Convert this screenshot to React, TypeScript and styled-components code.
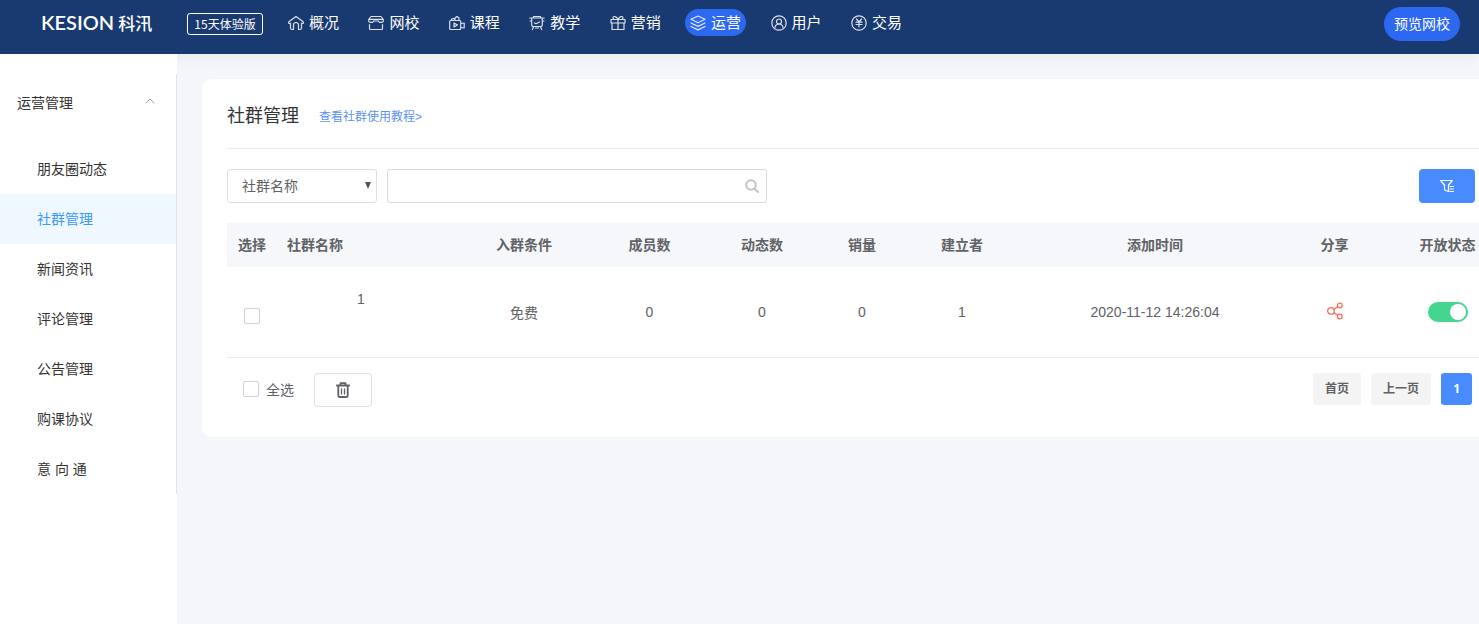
import React from "react";
import styled, { createGlobalStyle } from "styled-components";

const GlobalStyle = createGlobalStyle`
  *, *::before, *::after { box-sizing: border-box; }
  body {
    margin: 0;
    background: #f4f6fa;
    color: #333;
    font-family: "Liberation Sans", "Noto Sans CJK SC", sans-serif;
    font-size: 14px;
  }
  button, input, select { font: inherit; color: inherit; margin: 0; }
  ul { list-style: none; margin: 0; padding: 0; }
  a { color: inherit; text-decoration: none; }
`;

const Page = styled.div`
  display: flex;
  flex-direction: column;
  min-height: 100vh;
`;

const TopBar = styled.header`
  position: relative;
  display: flex;
  align-items: flex-start;
  height: 54px;
  padding: 0 19px 0 41px;
  background: #183a70;
  color: #fff;
  box-shadow: 0 2px 16px rgba(0, 0, 0, 0.06);
`;

const Logo = styled.a`
  display: flex;
  align-items: center;
  gap: 4px;
  width: 146px;
  height: 44px;
  font-family: Lato, sans-serif;
  font-size: 20px;
  font-weight: 600;
`;

const LogoCn = styled.span`
  font-family: "Noto Sans CJK SC", sans-serif;
  font-size: 17px;
  font-weight: 500;
`;

const TrialBadge = styled.span`
  width: 76px;
  height: 22px;
  margin-top: 13px;
  border: 1px solid #fff;
  border-radius: 3px;
  font-family: "Noto Sans CJK SC", sans-serif;
  font-size: 12px;
  line-height: 20px;
  text-align: center;
`;

const Nav = styled.nav`
  display: flex;
  justify-content: space-between;
  width: 624px;
  margin: 9px auto 0 20px;
`;

const NavLink = styled.a<{ $active?: boolean }>`
  display: flex;
  align-items: center;
  gap: 5px;
  height: 27px;
  padding: 0 5px;
  border-radius: 14px;
  background: ${(p) => (p.$active ? "#2d68f0" : "transparent")};
  font-size: 15px;
  line-height: 27px;
  white-space: nowrap;
`;

const LineIcon = styled.svg`
  display: block;
  flex: none;
  fill: none;
  stroke: currentColor;
  stroke-linecap: round;
  stroke-linejoin: round;
`;

const NavIcon = styled(LineIcon)`
  width: 16px;
  height: 16px;
  opacity: 0.85;
`;

const PreviewButton = styled.button`
  height: 34px;
  margin-top: 7px;
  padding: 0 10px 2px;
  border: 0;
  border-radius: 17px;
  background: #2d68f0;
  color: #fff;
  font-size: 14px;
  white-space: nowrap;
`;

const Body = styled.div`
  display: flex;
  flex: 1;
`;

const Sidebar = styled.aside`
  width: 177px;
  flex: none;
  padding-top: 20px;
  position: relative;
  background: #fff;
`;

const SideMenu = styled.div`
  border-right: 1px solid #e2e5e8;
`;

const SideHeading = styled.button`
  display: flex;
  align-items: center;
  justify-content: space-between;
  width: 100%;
  height: 56px;
  margin-bottom: 14px;
  padding: 0 20px 0 17px;
  border: 0;
  background: none;
`;

const Chevron = styled(LineIcon)`
  width: 12px;
  height: 12px;
  color: #a5a09b;
`;

const SideLink = styled.a<{ $active?: boolean }>`
  display: block;
  height: 50px;
  padding-left: 37px;
  background: ${(p) => (p.$active ? "#eff7ff" : "transparent")};
  color: ${(p) => (p.$active ? "#3b9bfc" : "#333")};
  line-height: 50px;
`;

const Main = styled.main`
  flex: 1;
  min-width: 0;
  padding: 25px 0 0 25px;
`;

const Card = styled.section`
  padding: 0 0 30px 25px;
  border-radius: 10px 0 0 10px;
  background: #fff;
`;

const CardHead = styled.div`
  display: flex;
  align-items: center;
  gap: 20px;
  height: 70px;
  border-bottom: 1px solid #ebebed;
`;

const Title = styled.h1`
  margin: 0;
  font-size: 18px;
  font-weight: 400;
`;

const HelpLink = styled.a`
  padding-top: 4px;
  color: #5c92f5;
  font-size: 12px;
`;

const Toolbar = styled.form`
  display: flex;
  gap: 10px;
  padding: 20px 4px 20px 0;
`;

const SelectBox = styled.label`
  position: relative;
  width: 150px;
`;

const Select = styled.select`
  appearance: none;
  width: 100%;
  height: 34px;
  padding: 0 20px 0 14px;
  border: 1px solid #dcdfe2;
  border-radius: 3px;
  background: #fff;
  color: #606266;
`;

const SelectArrow = styled.svg`
  position: absolute;
  top: 13px;
  right: 6px;
  width: 6px;
  height: 7px;
  fill: #555;
  pointer-events: none;
`;

const SearchBox = styled.label`
  display: flex;
  align-items: center;
  width: 380px;
  height: 34px;
  padding: 0 7px 0 12px;
  border: 1px solid #d9dbe1;
  border-radius: 3px;
`;

const SearchInput = styled.input`
  flex: 1;
  min-width: 0;
  border: 0;
  outline: 0;
  background: none;
`;

const SearchIcon = styled(LineIcon)`
  width: 14px;
  height: 14px;
  color: #c0c4cc;
`;

const FilterButton = styled.button`
  display: flex;
  align-items: center;
  justify-content: center;
  width: 56px;
  height: 34px;
  margin-left: auto;
  border: 0;
  border-radius: 4px;
  background: #488bff;
  color: #fff;
`;

const Table = styled.table`
  width: 100%;
  table-layout: fixed;
  border-collapse: separate;
  border-spacing: 0;
  color: #606266;
`;

const Col = styled.col<{ $w?: number }>`
  width: ${(p) => (p.$w ? `${p.$w}px` : "auto")};
`;

const Th = styled.th<{ $left?: boolean; $last?: boolean }>`
  height: 44px;
  padding: ${(p) => (p.$left ? "0 0 2px 10px" : p.$last ? "0 0 2px 45px" : "0 0 2px")};
  background: #f5f7fb;
  font-weight: 700;
  text-align: ${(p) => (p.$left ? "left" : "center")};
  white-space: nowrap;
`;

const Td = styled.td<{ $name?: boolean; $check?: boolean; $last?: boolean }>`
  height: 91px;
  padding: ${(p) =>
    p.$name ? "0 16px 26px 0" : p.$check ? "6px 0 0" : p.$last ? "0 0 0 45px" : "0"};
  border-bottom: 1px solid #ebebed;
  text-align: center;
`;

const Checkbox = styled.input`
  appearance: none;
  display: inline-block;
  width: 16px;
  height: 16px;
  border: 1px solid #d5d1d4;
  border-radius: 2px;
  background: #fff;
  vertical-align: middle;
  &:checked { background: #488bff; }
`;

const IconButton = styled.button`
  padding: 0 0 2px;
  border: 0;
  background: none;
  color: #f5705a;
  vertical-align: middle;
`;

const Switch = styled.input`
  appearance: none;
  display: inline-flex;
  align-items: center;
  width: 40px;
  height: 20px;
  padding: 0 2px;
  border-radius: 10px;
  background: #c8ccd4;
  vertical-align: middle;
  &::before {
    content: "";
    width: 16px;
    height: 16px;
    border-radius: 50%;
    background: #fff;
  }
  &:checked { background: #44d68e; justify-content: flex-end; }
`;

const CardFoot = styled.div`
  display: flex;
  align-items: flex-start;
  padding: 15px 7px 0 16px;
`;

const SelectAll = styled.label`
  display: flex;
  align-items: center;
  gap: 7px;
  height: 32px;
  margin-right: 20px;
  color: #606266;
`;

const DeleteButton = styled.button`
  display: flex;
  align-items: center;
  justify-content: center;
  width: 58px;
  height: 34px;
  border: 1px solid #dcdfe6;
  border-radius: 4px;
  background: #fff;
  color: #606266;
`;

const Pager = styled.nav`
  display: flex;
  gap: 10px;
  margin-left: auto;
`;

const PageButton = styled.button<{ $current?: boolean }>`
  height: 32px;
  padding: 0 12px 2px;
  border: 0;
  border-radius: 3px;
  background: ${(p) => (p.$current ? "#488bff" : "#f4f4f5")};
  color: ${(p) => (p.$current ? "#fff" : "#606266")};
  font-family: "Open Sans", "Noto Sans CJK SC", sans-serif;
  font-size: 12px;
  font-weight: 700;
`;

const navItems = [
  {
    label: "概况",
    icon: <path d="M1.500 8.500H.8V6.800L8 1.500l7.200 5.300v1.700h-.7M2.500 8v5a1.500 1.500 0 0 0 1.500 1.500h1.500V10a2.500 2.500 0 0 1 5 0v4.500H12a1.500 1.500 0 0 0 1.500-1.500V8" />,
  },
  {
    label: "网校",
    icon: <path d="M3 1.500h10l2.300 3v1.300a1.500 1.500 0 0 1-1.500 1.500H11.500L10.300 6H5.700L4.500 7.300H2.200A1.500 1.500 0 0 1 .7 5.800V4.500zM1 4.300h14M1.500 9.500v4a1 1 0 0 0 1 1h11a1 1 0 0 0 1-1v-4" />,
  },
  {
    label: "课程",
    icon: (
      <>
        <rect x="0.700" y="5.500" width="11" height="9" rx="1" />
        <path d="M11.700 8.500l3.500-.5v5l-3.500-.5M5 8v4l3.500-2zM2.500 5.500V4l2-.5 1.500 1M6 4.500V3l2-1.500L10 3v2.500" />
      </>
    ),
  },
  {
    label: "教学",
    icon: <path d="M.8 3h14.400M4.500 2.500V1.500h7v1M2.700 3v7a1.500 1.500 0 0 0 1.500 1.500h7.600a1.500 1.500 0 0 0 1.500-1.500V3M1 6h1.700m10.600 0H15M5.500 8l1.500.8L10.500 7M4.800 11.500l-1.500 3m7.900-3 1.500 3M6.500 13h3" />,
  },
  {
    label: "营销",
    icon: <path d="M1 4.500h14V8H1zM2 8v6.500h12V8M8 4.500v10M8 4.500C6.500 1 3 .8 3 2.700c0 1 .5 1.800 1.500 1.800M8 4.500C9.500 1 13 .8 13 2.700c0 1-.5 1.800-1.500 1.800" />,
  },
  {
    label: "运营",
    active: true,
    icon: <path d="M8 1l7 3.300-7 3.400-7-3.400zM1 8l7 3.400L15 8M1 11.500l7 3.400 7-3.400" />,
  },
  {
    label: "用户",
    icon: (
      <>
        <circle cx="8" cy="8" r="7.200" />
        <circle cx="8" cy="6.500" r="2.500" />
        <path d="M4 12.300C4.500 10 6 9 8 9s3.500 1 4 3.300" />
      </>
    ),
  },
  {
    label: "交易",
    icon: (
      <>
        <circle cx="8" cy="8" r="7.200" />
        <path d="M5.500 4L8 7l2.500-3M5 7.200h6M5 9.500h6M8 7v5" />
      </>
    ),
  },
];

const sideItems = ["朋友圈动态", "社群管理", "新闻资讯", "评论管理", "公告管理", "购课协议", "意 向 通"];

const columns: { label: string; width?: number }[] = [
  { label: "选择", width: 50 },
  { label: "社群名称", width: 184 },
  { label: "入群条件", width: 126 },
  { label: "成员数", width: 125 },
  { label: "动态数", width: 100 },
  { label: "销量", width: 100 },
  { label: "建立者", width: 100 },
  { label: "添加时间" },
  { label: "分享", width: 73 },
  { label: "开放状态", width: 108 },
];

export default function App() {
  return (
    <Page>
      <GlobalStyle />
      <TopBar>
        <Logo href="#">
          KESION<LogoCn>科汛</LogoCn>
        </Logo>
        <TrialBadge>15天体验版</TrialBadge>
        <Nav>
          {navItems.map((item) => (
            <NavLink key={item.label} href="#" $active={item.active}>
              <NavIcon viewBox="0 0 16 16" strokeWidth="1.200">{item.icon}</NavIcon>
              {item.label}
            </NavLink>
          ))}
        </Nav>
        <PreviewButton type="button">预览网校</PreviewButton>
      </TopBar>
      <Body>
        <Sidebar>
          <SideMenu>
            <SideHeading type="button">
              运营管理
              <Chevron viewBox="0 0 12 12">
                <path d="M2 7l4-4 4 4" />
              </Chevron>
            </SideHeading>
            <ul>
              {sideItems.map((label) => (
                <li key={label}>
                  <SideLink href="#" $active={label === "社群管理"}>{label}</SideLink>
                </li>
              ))}
            </ul>
          </SideMenu>
        </Sidebar>
        <Main>
          <Card>
            <CardHead>
              <Title>社群管理</Title>
              <HelpLink href="#">查看社群使用教程&gt;</HelpLink>
            </CardHead>
            <Toolbar>
              <SelectBox>
                <Select aria-label="搜索字段">
                  <option>社群名称</option>
                </Select>
                <SelectArrow viewBox="0 0 6 7">
                  <path d="M0 0h6L3 7z" />
                </SelectArrow>
              </SelectBox>
              <SearchBox>
                <SearchInput type="text" aria-label="搜索" />
                <SearchIcon viewBox="0 0 14 14" strokeWidth="2">
                  <circle cx="6" cy="6" r="4.800" />
                  <path d="M9.700 9.700L13 13" />
                </SearchIcon>
              </SearchBox>
              <FilterButton type="button" aria-label="筛选">
                <LineIcon width="14" height="14" viewBox="0 0 14 14" strokeWidth="1.200">
                  <path d="M.6 1.500h11.800L8.500 6v6.500L4.500 11V6zM10 7.500h3.400M10 10h3.400M10 12.500h3.400" />
                </LineIcon>
              </FilterButton>
            </Toolbar>
            <Table>
              <colgroup>
                {columns.map((c) => (
                  <Col key={c.label} $w={c.width} />
                ))}
              </colgroup>
              <thead>
                <tr>
                  {columns.map((c, i) => (
                    <Th key={c.label} $left={i === 1} $last={i === columns.length - 1}>
                      {c.label}
                    </Th>
                  ))}
                </tr>
              </thead>
              <tbody>
                <tr>
                  <Td $check>
                    <Checkbox type="checkbox" aria-label="选择" />
                  </Td>
                  <Td $name>1</Td>
                  <Td>免费</Td>
                  <Td>0</Td>
                  <Td>0</Td>
                  <Td>0</Td>
                  <Td>1</Td>
                  <Td>2020-11-12 14:26:04</Td>
                  <Td>
                    <IconButton type="button" aria-label="分享">
                      <LineIcon width="16" height="18" viewBox="0 0 16 18" strokeWidth="1.300">
                        <circle cx="4" cy="9" r="3.300" />
                        <circle cx="12.800" cy="3.500" r="2.400" />
                        <circle cx="12.800" cy="14.500" r="2.400" />
                        <path d="M7 7.300l3.700-2.400M7 10.700l3.700 2.400" />
                      </LineIcon>
                    </IconButton>
                  </Td>
                  <Td $last>
                    <Switch type="checkbox" role="switch" aria-label="开放状态" defaultChecked />
                  </Td>
                </tr>
              </tbody>
            </Table>
            <CardFoot>
              <SelectAll>
                <Checkbox type="checkbox" />
                全选
              </SelectAll>
              <DeleteButton type="button" aria-label="删除">
                <LineIcon width="14" height="16" viewBox="0 0 14 16" strokeWidth="1.800">
                  <path d="M.9 3.500h12.200M4.500 3V1.200h5V3M2.300 3.500v10.300a1.200 1.200 0 0 0 1.200 1.200h7a1.200 1.200 0 0 0 1.200-1.200V3.500" />
                  <path strokeWidth="1.300" d="M5.500 7v5M8.500 7v5" />
                </LineIcon>
              </DeleteButton>
              <Pager aria-label="分页">
                <PageButton type="button">首页</PageButton>
                <PageButton type="button">上一页</PageButton>
                <PageButton type="button" $current>1</PageButton>
              </Pager>
            </CardFoot>
          </Card>
        </Main>
      </Body>
    </Page>
  );
}
